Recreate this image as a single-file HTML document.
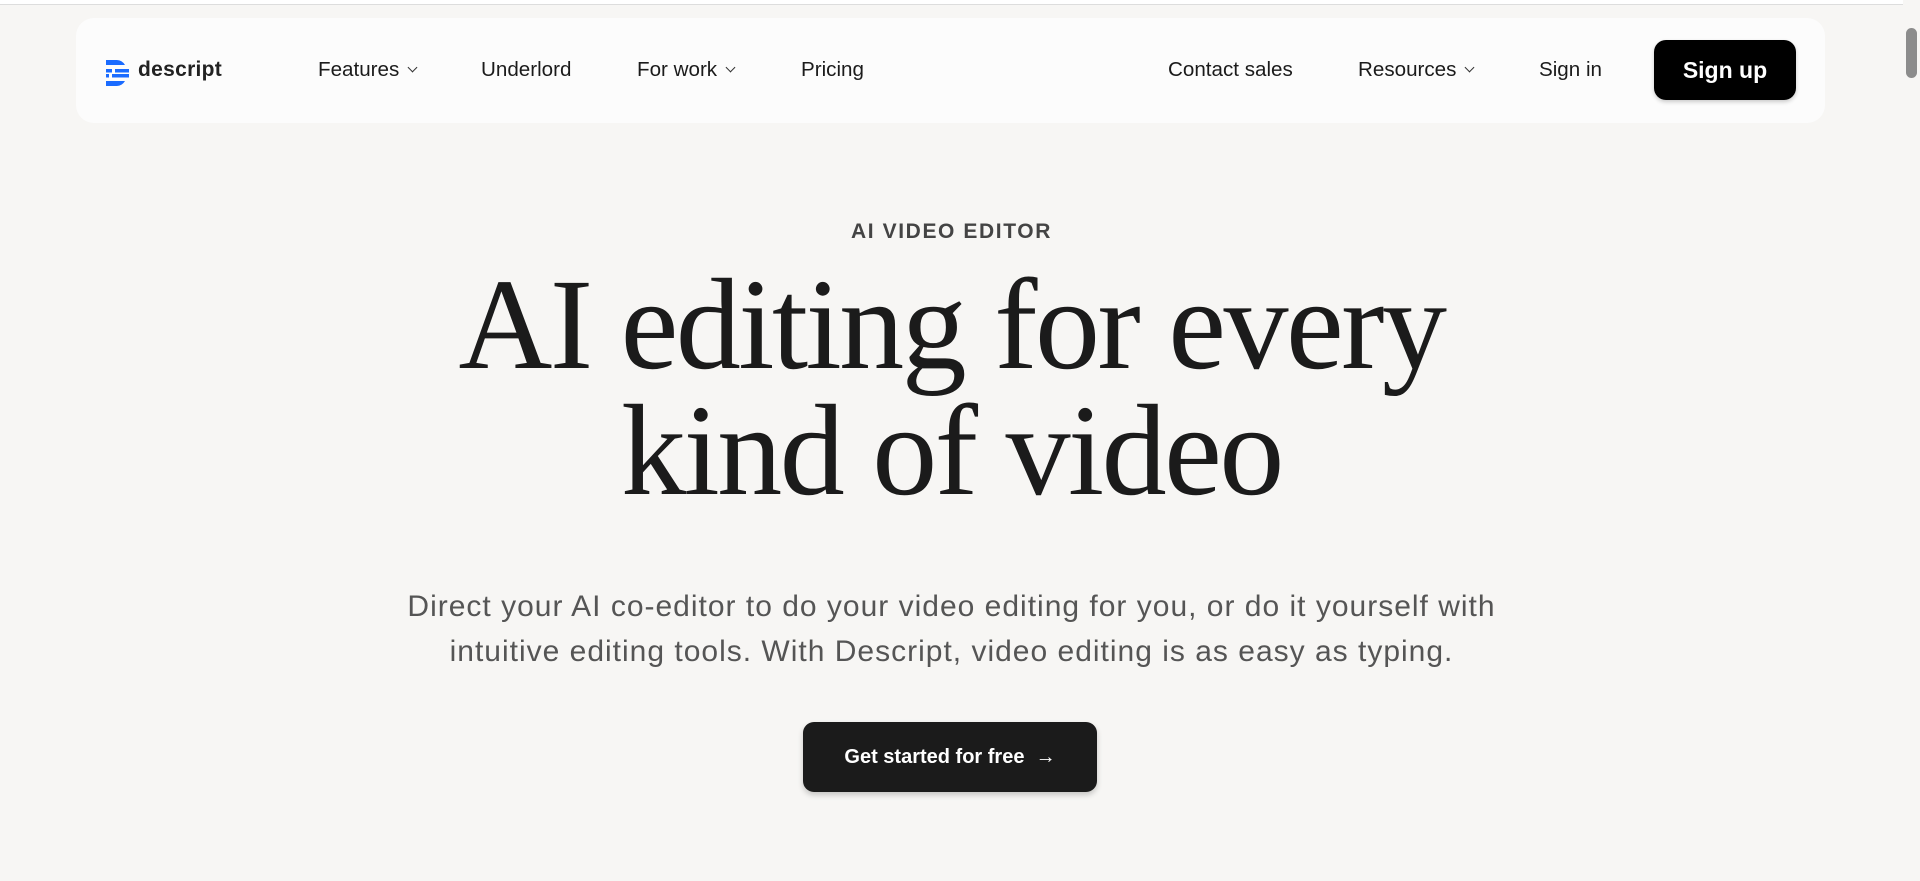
<!DOCTYPE html>
<html><head><meta charset="utf-8"><style>
*{margin:0;padding:0;box-sizing:border-box}
html,body{width:1920px;height:881px;overflow:hidden}
body{background:#f7f6f4;font-family:"Liberation Sans",sans-serif;color:#1b1b1b;position:relative}
.topline{position:absolute;left:0;top:0;width:1903px;height:5px;background:#fff;border-bottom:1px solid #ddd}
.nav{position:absolute;left:76px;top:18px;width:1749px;height:105px;background:#fcfcfc;border-radius:18px}
.ni{position:absolute;top:56px;font-size:20.6px;line-height:28px;color:#1b1b1b;white-space:nowrap}
.chev{display:inline-block;width:7px;height:7px;border-right:1.5px solid #333;border-bottom:1.5px solid #333;transform:rotate(45deg);margin-left:10px;position:relative;top:-5px}
.logo{position:absolute;left:106px;top:60px}
.logotxt{position:absolute;left:138px;top:58px;font-size:21px;font-weight:bold;color:#222;letter-spacing:0.3px}
.signup{position:absolute;left:1654px;top:40px;width:142px;height:60px;background:#000;color:#fff;border-radius:12px;font-size:23px;font-weight:bold;text-align:center;line-height:60px;box-shadow:0 2px 4px rgba(0,0,0,.2)}
.eyebrow{position:absolute;top:220px;width:1903px;text-align:center;font-size:21px;font-weight:bold;letter-spacing:1.6px;color:#444}
h1{position:absolute;top:262px;width:1903px;text-align:center;font-family:"Liberation Serif",serif;font-weight:normal;font-size:130px;line-height:126px;letter-spacing:-2.5px;color:#1b1b1b}
.p{position:absolute;top:584px;width:1903px;text-align:center;font-size:30px;letter-spacing:1px;line-height:45px;color:#555}
.btn{position:absolute;left:803px;top:722px;width:294px;height:70px;background:#1b1b1b;border-radius:11px;color:#fff;font-size:20px;font-weight:bold;text-align:center;line-height:70px;box-shadow:0 3px 6px rgba(0,0,0,.2)}
.sb{position:absolute;right:0;top:0;width:17px;height:881px;background:#f7f6f4}
.thumb{position:absolute;right:3px;top:28px;width:11px;height:50px;background:#8c8c8c;border-radius:6px}
</style></head><body>
<div class="topline"></div>
<div class="nav"></div>
<svg class="logo" width="24" height="26" viewBox="0 0 24 26"><g fill="#1a6bff"><path d="M0 0h10a10 10 0 0 1 9 5H0z"/><rect x="0" y="9" width="6" height="3.5"/><rect x="9" y="9" width="14" height="3.5"/><rect x="0" y="14" width="3" height="3.5"/><rect x="6" y="14" width="17" height="3.5"/><path d="M0 21h19a10 10 0 0 1-9 5H0z"/></g></svg>
<div class="logotxt">descript</div>
<div class="ni" style="left:318px">Features<span class="chev"></span></div>
<div class="ni" style="left:481px">Underlord</div>
<div class="ni" style="left:637px">For work<span class="chev"></span></div>
<div class="ni" style="left:801px">Pricing</div>
<div class="ni" style="left:1168px">Contact sales</div>
<div class="ni" style="left:1358px">Resources<span class="chev"></span></div>
<div class="ni" style="left:1539px">Sign in</div>
<div class="signup">Sign up</div>
<div class="eyebrow">AI VIDEO EDITOR</div>
<h1>AI editing for every<br>kind of video</h1>
<div class="p">Direct your AI co-editor to do your video editing for you, or do it yourself with<br>intuitive editing tools. With Descript, video editing is as easy as typing.</div>
<div class="btn">Get started for free &nbsp;→</div>
<div class="sb"><div class="thumb"></div></div>
</body></html>
